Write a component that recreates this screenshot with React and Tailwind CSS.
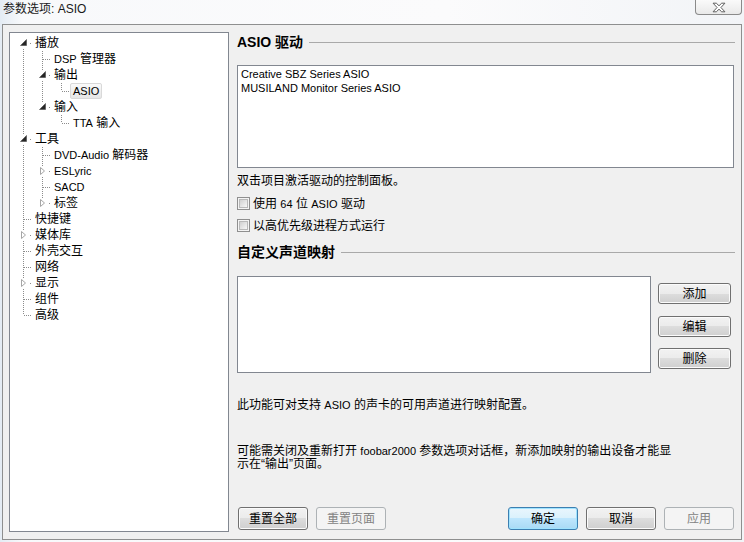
import React from "react";
import clsx from "clsx";

// tree rows: level, label, next sibling?, ancestors' next flags, expander
const rows = [
  { l: 0, t: "播放", next: true, anc: [], exp: "open", first: true },
  { l: 1, t: "DSP 管理器", next: true, anc: [true] },
  { l: 1, t: "输出", next: true, anc: [true], exp: "open" },
  { l: 2, t: "ASIO", next: false, anc: [true, true], sel: true },
  { l: 1, t: "输入", next: false, anc: [true], exp: "open" },
  { l: 2, t: "TTA 输入", next: false, anc: [true, false] },
  { l: 0, t: "工具", next: true, anc: [], exp: "open" },
  { l: 1, t: "DVD-Audio 解码器", next: true, anc: [true] },
  { l: 1, t: "ESLyric", next: true, anc: [true], exp: "closed" },
  { l: 1, t: "SACD", next: true, anc: [true] },
  { l: 1, t: "标签", next: false, anc: [true], exp: "closed" },
  { l: 0, t: "快捷键", next: true, anc: [] },
  { l: 0, t: "媒体库", next: true, anc: [], exp: "closed" },
  { l: 0, t: "外壳交互", next: true, anc: [] },
  { l: 0, t: "网络", next: true, anc: [] },
  { l: 0, t: "显示", next: true, anc: [], exp: "closed" },
  { l: 0, t: "组件", next: true, anc: [] },
  { l: 0, t: "高级", next: false, anc: [] },
];

const dot = { stroke: "#8c8c8c", strokeWidth: 1, strokeDasharray: "1 1", shapeRendering: "crispEdges" };

// latin runs are drawn a bit smaller, like Tahoma next to SimSun
const Mixed = ({ text }) =>
  text.split(/([A-Za-z0-9][A-Za-z0-9\-]*(?: [A-Za-z0-9][A-Za-z0-9\-]*)*)/).map((s, i) =>
    /[A-Za-z0-9]/.test(s) ? (
      <span key={i} className="text-[11px]">{s}</span>
    ) : (
      s
    )
  );

const PassCell = ({ on }) => (
  <svg width="19" height="16" className="block shrink-0">
    {on && <line x1="10.5" y1="0" x2="10.5" y2="16" style={dot} />}
  </svg>
);

const OwnCell = ({ row }) => (
  <svg width="19" height="16" className="block shrink-0">
    {!row.first && <line x1="10.5" y1="0" x2="10.5" y2="8" style={dot} />}
    {row.next && <line x1="10.5" y1="8" x2="10.5" y2="16" style={dot} />}
    <line x1="11" y1="8.5" x2="19" y2="8.5" style={dot} />
    {row.exp && <rect x="6" y="3" width="10" height="10" fill="#fff" />}
    {row.exp === "open" && <polygon points="13.5,4.5 13.5,10.5 7.5,10.5" fill="#262626" stroke="#4a4a4a" strokeWidth="0.6" />}
    {row.exp === "closed" && <polygon points="8.5,4.5 8.5,11.5 12.5,8" fill="#fff" stroke="#a6a6a6" />}
  </svg>
);

const TreeRow = ({ row }) => (
  <div className="flex h-4 items-center">
    {row.anc.map((a, i) => (
      <PassCell key={i} on={a} />
    ))}
    <OwnCell row={row} />
    <span
      className={clsx(
        "h-4 whitespace-nowrap rounded-[2px] border px-[2px] leading-[14px]",
        row.sel ? "border-[#d9d9d9] bg-[linear-gradient(#fafafa,#e6e6e6)]" : "border-transparent"
      )}
    >
      <Mixed text={row.t} />
    </span>
  </div>
);

const Btn = ({ children, kind = "normal", className }) => (
  <div
    className={clsx(
      "flex items-center justify-center rounded-[3px] border text-[12px] leading-none",
      kind === "normal" &&
        "border-[#707070] bg-[linear-gradient(#f2f2f2,#ebebeb_50%,#dddddd_50%,#cfcfcf)] shadow-[inset_0_0_0_1px_#fbfbfb] text-black",
      kind === "primary" &&
        "border-[#3c7fb1] bg-[linear-gradient(#e9f6fd,#daf1fc_50%,#bee6fd_50%,#a9daf5)] shadow-[inset_0_0_0_1px_#9fe3ff] text-black",
      kind === "disabled" && "border-[#adb2b5] bg-[#f4f4f4] text-[#838383]",
      className
    )}
  >
    {children}
  </div>
);

const Check = ({ label }) => (
  <div className="mt-[9px] flex h-[13px] items-center gap-[3px]">
    <div className="h-[13px] w-[13px] border border-[#8f8f8f] bg-[#f4f4f4] p-[1px]">
      <div className="h-full w-full border border-[#b9b9b9] bg-[linear-gradient(135deg,#d0d0d0,#f7f7f7)]" />
    </div>
    <span className="leading-[14px]">
      <Mixed text={label} />
    </span>
  </div>
);

const Heading = ({ children }) => (
  <div className="flex h-4 items-center">
    <span className="whitespace-nowrap text-[14px] font-bold leading-4">{children}</span>
    <div className="ml-[6px] h-px flex-1 bg-[#a9a9a9]" />
  </div>
);

export default function App() {
  return (
    <div className="flex h-[542px] w-[744px] flex-col overflow-hidden bg-[linear-gradient(90deg,#e4ecf4,#f8f9fb_3%,#fbfbfc_60%,#f2f4f7)] font-['Liberation_Sans','Noto_Sans_CJK_SC',sans-serif] text-[12px] text-black">
      {/* title bar */}
      <div className="flex h-6 shrink-0 items-start justify-between">
        <span className="pl-[3px] pt-px leading-4 text-[#1a1a1a]">参数选项: ASIO</span>
        <div className="mr-[2px] flex h-[15px] w-[47px] items-center justify-center rounded-b-[4px] border border-t-0 border-[#8a8a8a] bg-[linear-gradient(#fafafa,#e9e9e9)]">
          <svg width="14" height="11" viewBox="0 0 13 10">
            <polygon
              points="1,1 4,1 6.5,3.4 9,1 12,1 8.3,5 12,9 9,9 6.5,6.6 4,9 1,9 4.7,5"
              fill="#fff"
              stroke="#5a5a5a"
              strokeWidth="0.9"
            />
          </svg>
        </div>
      </div>

      {/* client area */}
      <div className="mx-[2px] flex h-[516px] shrink-0 border border-[#8e8f8f] bg-[#f0f0f0] pb-[7px] pl-[6px] pr-[6px] pt-[7px]">
        {/* tree */}
        <div className="w-[220px] shrink-0 border border-[#828790] bg-white pl-[3px] pt-[2px]">
          {rows.map((r, i) => (
            <TreeRow key={i} row={r} />
          ))}
        </div>

        {/* page */}
        <div className="ml-[8px] flex w-[498px] flex-col pt-[2px]">
          <Heading>ASIO 驱动</Heading>
          <div className="mt-[15px] h-[103px] w-[497px] border border-[#828790] bg-white px-[3px] pt-px text-[11px] leading-[14px]">
            <div>Creative SBZ Series ASIO</div>
            <div>MUSILAND Monitor Series ASIO</div>
          </div>
          <div className="mt-[6px] leading-[14px]">双击项目激活驱动的控制面板。</div>
          <Check label="使用 64 位 ASIO 驱动" />
          <Check label="以高优先级进程方式运行" />

          <div className="mt-[12px]">
            <Heading>自定义声道映射</Heading>
          </div>
          <div className="mt-[16px] flex">
            <div className="h-[97px] w-[414px] border border-[#828790] bg-white" />
            <div className="ml-[7px] flex flex-col pt-[7px]">
              <Btn className="h-[21px] w-[73px]">添加</Btn>
              <Btn className="mt-[12px] h-[21px] w-[73px]">编辑</Btn>
              <Btn className="mt-[11px] h-[21px] w-[73px]">删除</Btn>
            </div>
          </div>

          <div className="mt-[25px] leading-[14px]">
            <Mixed text="此功能可对支持 ASIO 的声卡的可用声道进行映射配置。" />
          </div>
          <div className="mt-[33px] whitespace-nowrap leading-[13px]">
            <Mixed text="可能需关闭及重新打开 foobar2000 参数选项对话框，新添加映射的输出设备才能显" />
            <br />
            示在“输出”页面。
          </div>

          <div className="mb-[2px] mt-auto flex h-[23px]">
            <Btn className="ml-px w-[70px]">重置全部</Btn>
            <Btn kind="disabled" className="ml-[8px] w-[70px]">重置页面</Btn>
            <div className="flex-1" />
            <Btn kind="primary" className="w-[70px]">确定</Btn>
            <Btn className="ml-[8px] w-[70px]">取消</Btn>
            <Btn kind="disabled" className="ml-[8px] mr-px w-[70px]">应用</Btn>
          </div>
        </div>
      </div>
    </div>
  );
}
